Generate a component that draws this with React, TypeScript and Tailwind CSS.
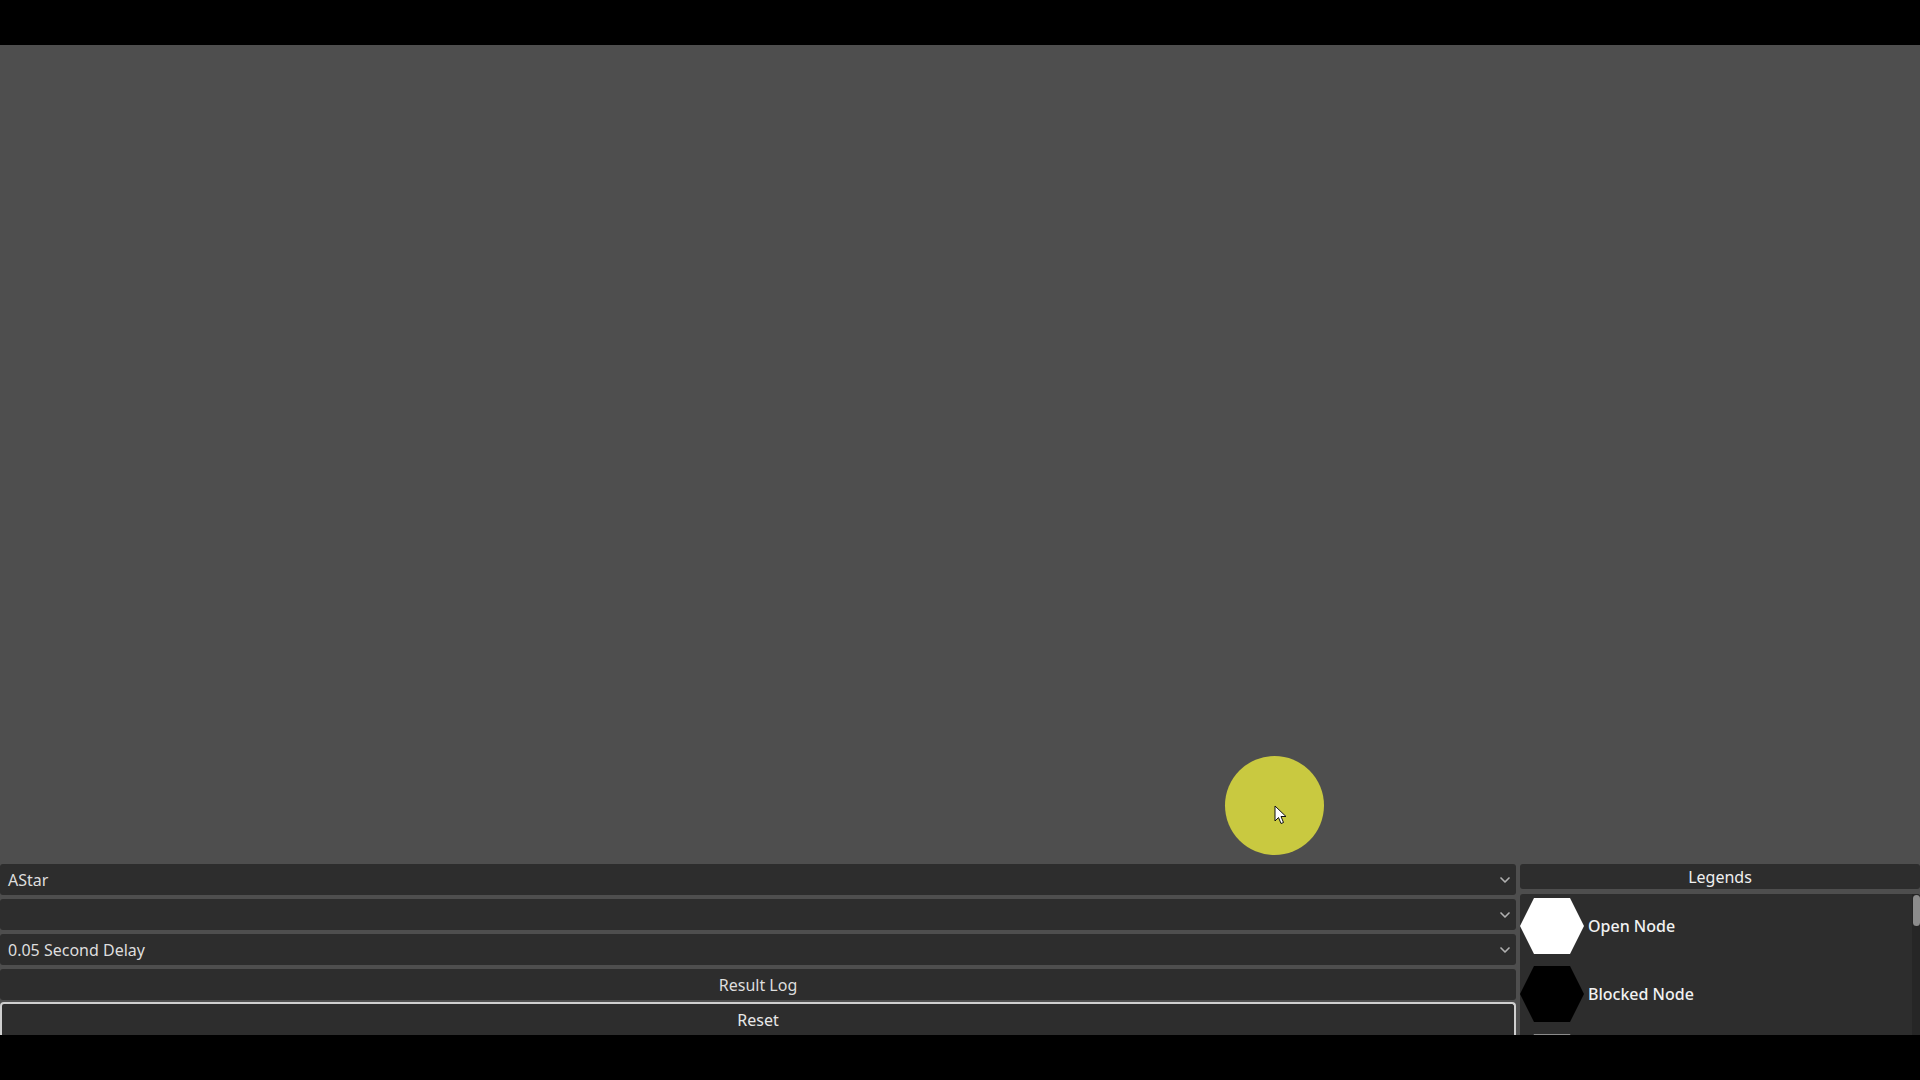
import { ChevronDown } from 'lucide-react';

const font = { fontFamily: '"Noto Sans", "Open Sans", sans-serif' };

function Dropdown({ label }: { label: string }) {
    return (
        <div className="h-[31px] flex items-center justify-between bg-[#2d2d2d] rounded-[3px] pl-[8px] pr-[3px]">
            <span className="text-[16px] text-[#dedede] leading-none">{label}</span>
            <ChevronDown size={16} strokeWidth={2.5} className="text-[#b0b0b0]" />
        </div>
    );
}

function Hex({ color }: { color: string }) {
    return (
        <svg width="64" height="56" viewBox="0 0 64 56" className="flex-shrink-0">
            <polygon points="0,28 14,0 50,0 64,28 50,56 14,56" fill={color} />
        </svg>
    );
}

// third entry is scrolled out of view, only the top of its swatch shows
const legends = [
    { label: 'Open Node', color: '#ffffff' },
    { label: 'Blocked Node', color: '#000000' },
    { label: '', color: '#8a8a8a' },
];

export default function App() {
    return (
        <div className="w-[1920px] h-[1080px] bg-black flex flex-col overflow-hidden" style={font}>
            <div className="h-[45px] flex-shrink-0" />
            <div className="h-[990px] bg-[#4e4e4e] flex flex-col">
                <div className="relative flex-1">
                    <div className="absolute left-[1225px] top-[711px] w-[99px] h-[99px] rounded-full bg-[#c9c940]" />
                    <svg className="absolute left-[1274px] top-[760px]" width="13" height="20" viewBox="0 0 13 20">
                        <path d="M1 1 L1 16 L4.5 12.5 L7 18.5 L9.5 17.5 L7 11.5 L12 11.5 Z" fill="#ffffff" stroke="#111111" strokeWidth="1" strokeLinejoin="round" />
                    </svg>
                </div>
                <div className="h-[171px] flex gap-[4px] flex-shrink-0">
                    <div className="w-[1516px] flex flex-col gap-[4px]">
                        <Dropdown label="AStar" />
                        <Dropdown label="" />
                        <Dropdown label="0.05 Second Delay" />
                        <div className="h-[31px] flex items-center justify-center bg-[#2d2d2d] rounded-[3px] text-[16px] text-[#dedede]">
                            Result Log
                        </div>
                        <div className="-mt-[2px] flex-1 flex items-start justify-center pt-[4px] bg-[#2d2d2d] rounded-t-[4px] border-2 border-b-0 border-[#cfcfcf] text-[16px] text-[#e8e8e8]">
                            Reset
                        </div>
                    </div>
                    <div className="flex-1 flex flex-col gap-[5px]">
                        <div className="h-[25px] flex items-center justify-center bg-[#2d2d2d] rounded-[3px] text-[16px] text-[#f0f0f0]">
                            Legends
                        </div>
                        <div className="relative flex-1 bg-[#2d2d2d] rounded-t-[3px] overflow-hidden">
                            <div className="flex flex-col gap-[12px] pt-[4px]">
                                {legends.map((item, i) => (
                                    <div key={i} className="flex items-center gap-[4px]">
                                        <Hex color={item.color} />
                                        {item.label && (
                                            <span className="text-[16px] text-[#f2f2f2] font-medium">{item.label}</span>
                                        )}
                                    </div>
                                ))}
                            </div>
                            <div className="absolute right-0 top-0 bottom-0 w-[8px] bg-[#262626]" />
                            <div className="absolute right-0 top-[1px] w-[7px] h-[31px] rounded-[4px] bg-[#8c8c8c]" />
                        </div>
                    </div>
                </div>
            </div>
        </div>
    );
}
